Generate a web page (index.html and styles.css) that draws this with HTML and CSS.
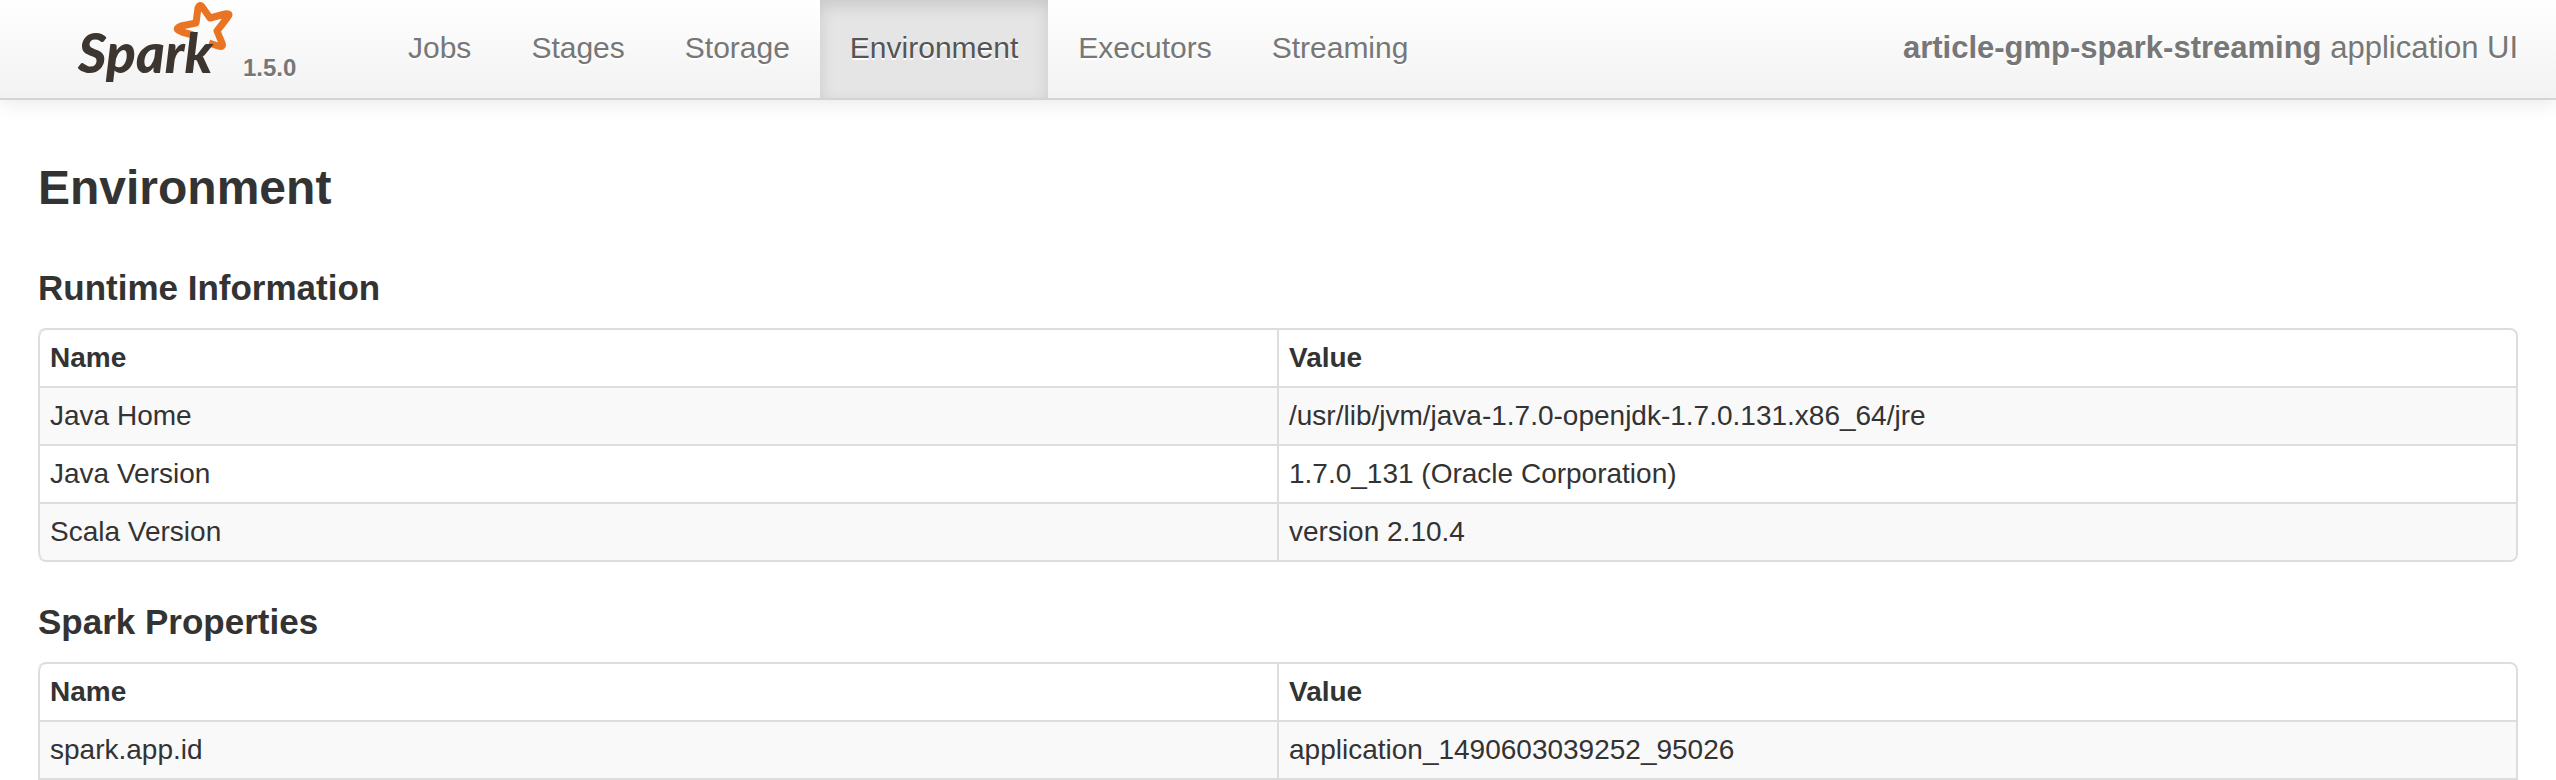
FILE: index.html
```html
<!DOCTYPE html>
<html lang="en">
<head>
<meta charset="utf-8">
<title>article-gmp-spark-streaming - Environment</title>
<link rel="stylesheet" href="styles.css">
</head>
<body>
<header class="navbar">
  <a class="brand" href="#">
    <svg class="logo" width="156" height="84" viewBox="0 0 156 84" role="img" aria-label="Spark">
      <path class="logo-star" d="M116 35 L105 32 Q96 29 104 26 L119 23 L121 8 Q123 3 126 8 L133 18 L148 14 Q155 13 150 18 L140 31 L145 43 Q147 48 141 46 L132 43"/>
      <text class="logo-word" x="1" y="73">Spark</text>
    </svg>
    <span class="version">1.5.0</span>
  </a>
  <nav class="nav">
    <a class="nav-link" href="#">Jobs</a>
    <a class="nav-link" href="#">Stages</a>
    <a class="nav-link" href="#">Storage</a>
    <a class="nav-link active" href="#" aria-current="page">Environment</a>
    <a class="nav-link" href="#">Executors</a>
    <a class="nav-link" href="#">Streaming</a>
  </nav>
  <p class="app-name"><strong>article-gmp-spark-streaming</strong> application UI</p>
</header>
<main class="content">
  <h1 class="page-title">Environment</h1>
  <section class="block">
    <h2 class="block-title" id="runtime">Runtime Information</h2>
    <table class="props closed" aria-labelledby="runtime">
      <thead><tr><th>Name</th><th>Value</th></tr></thead>
      <tbody>
        <tr><td>Java Home</td><td>/usr/lib/jvm/java-1.7.0-openjdk-1.7.0.131.x86_64/jre</td></tr>
        <tr><td>Java Version</td><td>1.7.0_131 (Oracle Corporation)</td></tr>
        <tr><td>Scala Version</td><td>version 2.10.4</td></tr>
      </tbody>
    </table>
  </section>
  <section class="block">
    <h2 class="block-title" id="spark">Spark Properties</h2>
    <table class="props" aria-labelledby="spark">
      <thead><tr><th>Name</th><th>Value</th></tr></thead>
      <tbody>
        <tr><td>spark.app.id</td><td>application_1490603039252_95026</td></tr>
      </tbody>
    </table>
  </section>
</main>
</body>
</html>
```
FILE: styles.css
```css
* { box-sizing: border-box; }
body {
  margin: 0;
  background: #fff;
  color: #333;
  font: 28px/40px "Liberation Sans", Arial, sans-serif;
}
.navbar {
  display: flex;
  align-items: stretch;
  height: 100px;
  padding: 0 38px 0 77px;
  border-bottom: 2px solid #d4d4d4;
  background: linear-gradient(#fff, #f2f2f2);
  box-shadow: 0 2px 20px rgba(0, 0, 0, .1);
  color: #777;
  font-size: 31px;
  text-shadow: 0 2px 0 #fff;
}
.brand {
  display: flex;
  align-items: flex-start;
  gap: 10px;
  width: 301px;
  color: #777;
  text-decoration: none;
}
.logo { display: block; flex: none; }
.logo-word {
  fill: #3c3530;
  font: italic 900 55px Lato, sans-serif;
  text-shadow: none;
}
.logo-star { fill: none; stroke: #e87424; stroke-width: 7; stroke-linejoin: round; }
.version { padding-top: 48px; font-size: 24px; font-weight: bold; }
.nav { display: flex; font-size: 30px; }
.nav-link {
  padding: 28px 30px;
  color: #777;
  text-decoration: none;
}
.nav-link.active {
  background: #e5e5e5;
  box-shadow: inset 0 6px 16px rgba(0, 0, 0, .125);
  color: #555;
}
.app-name { margin: 0 0 0 auto; padding-top: 28px; }
.content { padding: 48px 38px 0; }
.page-title { margin: 0; font-size: 48px; line-height: 80px; }
.block { padding-top: 40px; }
.block-title { margin: 0 0 20px; font-size: 35px; line-height: 40px; }
.props {
  width: 100%;
  table-layout: fixed;
  border: 2px solid #ddd;
  border-left: 0;
  border-spacing: 0;
  border-radius: 8px 8px 0 0;
}
.props.closed { border-radius: 8px; }
.props th, .props td {
  padding: 8px 10px;
  border-left: 2px solid #ddd;
  text-align: left;
}
.props td { border-top: 2px solid #ddd; }
.props tbody tr:nth-child(odd) td { background: #f9f9f9; }
.props th:first-child { border-top-left-radius: 8px; }
.props.closed tr:last-child td:first-child { border-bottom-left-radius: 8px; }
.props.closed tr:last-child td:last-child { border-bottom-right-radius: 8px; }
```
